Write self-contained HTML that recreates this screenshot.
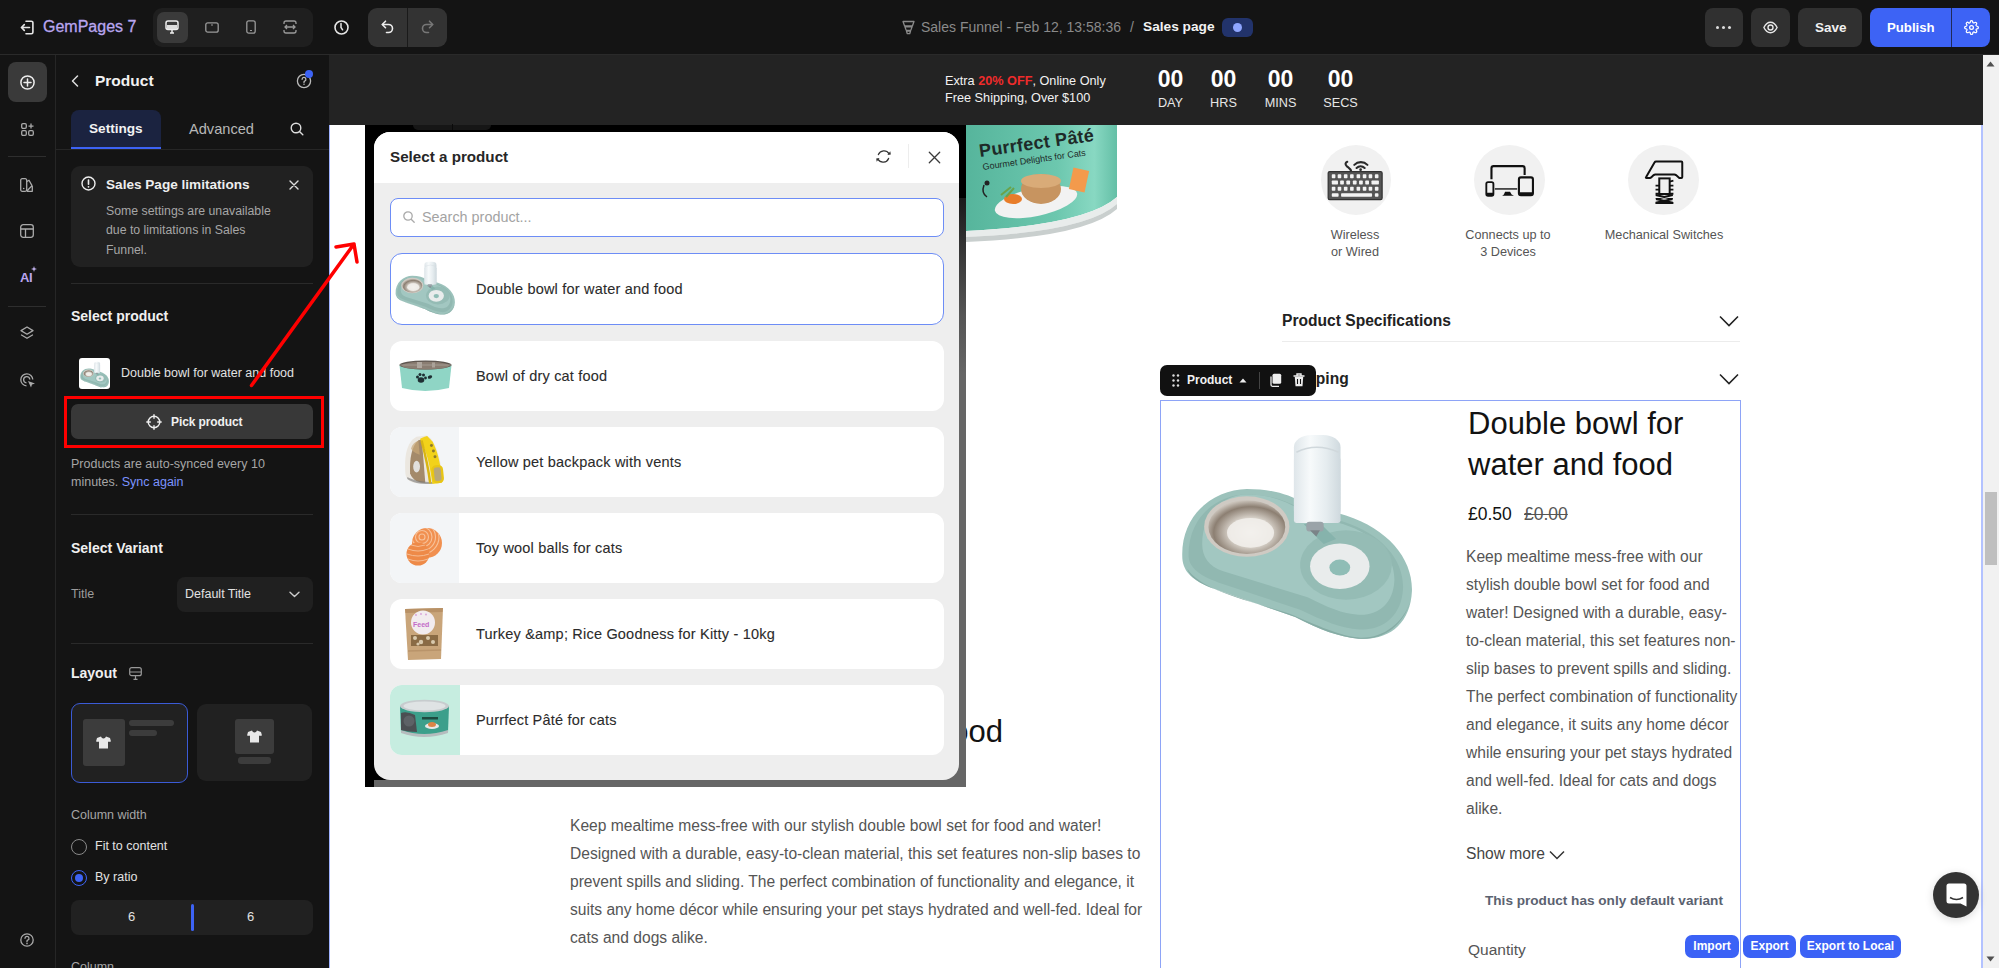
<!DOCTYPE html>
<html><head><meta charset="utf-8">
<style>
*{box-sizing:border-box;margin:0;padding:0}
html,body{width:1999px;height:968px;overflow:hidden;background:#141414;font-family:"Liberation Sans",sans-serif}
.a{position:absolute}
.t{position:absolute;white-space:nowrap;line-height:1}
svg{position:absolute;overflow:visible}
</style></head><body>
<svg style="left:0;top:0;width:0;height:0;position:absolute" width="0" height="0">
<defs>
<radialGradient id="steel" cx="0.55" cy="0.6" r="0.6"><stop offset="0" stop-color="#f4f2ee"/><stop offset="0.45" stop-color="#d8d2ca"/><stop offset="0.8" stop-color="#8c7f72"/><stop offset="1" stop-color="#c9c2b9"/></radialGradient>
<linearGradient id="bottle" x1="0" x2="1"><stop offset="0" stop-color="#dfe6ea"/><stop offset="0.35" stop-color="#f7fafb"/><stop offset="0.7" stop-color="#e5ecef"/><stop offset="1" stop-color="#cfd9de"/></linearGradient>
<symbol id="dbowl" viewBox="0 0 1089 968">
<path d="M70 560C60 380 200 280 330 278C430 278 500 300 560 335L730 385C900 440 1000 560 996 690C990 820 905 892 780 882C700 876 625 845 525 795L200 682C110 650 75 612 70 560Z" fill="#9cc2bb"/>
<path d="M95 545C95 390 210 300 330 300C420 300 490 325 550 360L720 410C880 460 965 570 960 680C955 790 880 850 785 845C710 840 640 810 545 765L215 655C130 625 95 590 95 545Z" fill="#91b8b1"/>
<path d="M150 500C150 370 240 300 330 300C420 300 500 330 555 370L720 420C860 465 930 560 925 650C920 740 860 790 780 785C715 782 655 755 575 715L235 610C175 590 150 550 150 500Z" fill="#a2c7c1"/>
<path d="M90 600C140 680 300 720 500 780C620 830 700 870 790 878C880 880 960 820 990 730C960 830 880 890 780 882C700 876 625 845 525 795L200 682C140 660 100 635 90 600Z" fill="#86aca5"/>
<ellipse cx="330" cy="430" rx="172" ry="122" fill="#cfcac3"/>
<ellipse cx="330" cy="432" rx="155" ry="108" fill="url(#steel)"/>
<ellipse cx="345" cy="455" rx="95" ry="60" fill="#f2f0ec" opacity="0.85"/>
<ellipse cx="730" cy="585" rx="185" ry="140" fill="#95bcb5"/>
<ellipse cx="705" cy="590" rx="120" ry="92" fill="#e9ecec"/>
<ellipse cx="705" cy="595" rx="42" ry="32" fill="#8fbdb6"/>
<path d="M560 420 640 500 690 480 620 410Z" fill="#86b3ac"/>
<rect x="520" y="60" width="188" height="355" rx="70" ry="50" fill="url(#bottle)"/>
<rect x="520" y="150" width="188" height="265" rx="10" fill="url(#bottle)"/>
<path d="M530 130Q610 90 700 130" fill="none" stroke="#d0d8dc" stroke-width="6"/>
<rect x="570" y="410" width="70" height="40" rx="12" fill="#9aa3a8"/>
<path d="M585 445 610 470 625 445Z" fill="#7b8488"/>
</symbol>
<symbol id="cbowl" viewBox="0 0 53 32">
<path d="M0.5 5 L52.5 5 L50 28 Q26 34 3 28 Z" fill="#8fd5c5"/>
<ellipse cx="26.5" cy="5" rx="26" ry="4.6" fill="#5e5650"/>
<ellipse cx="26.5" cy="5.6" rx="24" ry="3.8" fill="#8a7d72"/>
<rect x="18" y="2" width="5" height="6" fill="#b9b2aa" opacity="0.8"/>
<rect x="33" y="2.5" width="3" height="5" fill="#b9b2aa" opacity="0.7"/>
<path d="M0.5 5 L52.5 5" stroke="#a9a29a" stroke-width="0.8"/>
<g fill="#1f2f33"><ellipse cx="22" cy="20" rx="3.3" ry="2.8"/><circle cx="18.5" cy="17" r="1.5"/><circle cx="21" cy="14.5" r="1.5"/><circle cx="24.5" cy="15" r="1.5"/><circle cx="26.5" cy="18" r="1.4"/><ellipse cx="31" cy="17" rx="2.3" ry="1.6" transform="rotate(-25 31 17)"/></g>
</symbol>
<symbol id="bpack" viewBox="0 0 839 968">
<path d="M120 700C100 450 130 200 300 110L460 90C560 130 640 300 690 560L720 800C650 870 450 880 300 860C170 840 130 780 120 700Z" fill="#ebe7e0"/>
<path d="M195 700C185 480 215 260 330 165L385 155L440 850C340 850 240 820 195 700Z" fill="#a48a6a"/>
<ellipse cx="300" cy="590" rx="55" ry="95" fill="#e2e0dc"/>
<path d="M210 300C230 230 280 190 330 175L350 400C300 380 240 360 210 300Z" fill="#c9a878" opacity="0.7"/>
<path d="M150 760C250 820 400 840 560 840L560 870C420 880 250 860 150 790Z" fill="#777" opacity="0.6"/>
<path d="M355 145C400 110 470 95 470 95L560 190C630 330 680 520 700 700L705 850L555 870C520 600 470 350 355 145Z" fill="#f2d21a"/>
<path d="M380 170C440 400 490 620 520 860" fill="none" stroke="#d9b512" stroke-width="40"/>
<g fill="#8d7b2c"><circle cx="540" cy="250" r="24"/><circle cx="572" cy="340" r="24"/><circle cx="597" cy="432" r="24"/></g>
<rect x="565" y="585" width="150" height="255" rx="55" fill="#b8a77a" stroke="#e8c515" stroke-width="38" transform="rotate(-6 640 712)"/>
</symbol>
<symbol id="balls" viewBox="0 0 36 40">
<clipPath id="bc1"><circle cx="21" cy="16" r="15"/></clipPath><clipPath id="bc2"><circle cx="12" cy="27" r="11.5"/></clipPath>
<circle cx="21" cy="16" r="15" fill="#f19050"/>
<g fill="none" stroke="#f7c29a" stroke-width="1.1" clip-path="url(#bc1)"><circle cx="16" cy="10" r="3"/><circle cx="16" cy="10" r="6.5"/><circle cx="16" cy="10" r="10"/><circle cx="16" cy="10" r="13.5"/><circle cx="16" cy="10" r="17"/></g>
<circle cx="12" cy="27" r="11.5" fill="#ee8a48"/>
<g fill="none" stroke="#f5bc93" stroke-width="1" clip-path="url(#bc2)"><path d="M2 22q10 4 20 0"/><path d="M1 27q11 4 22 0"/><path d="M2 32q10 4 20 0"/><path d="M5 18q7 3 14 0"/></g>
<circle cx="21" cy="16" r="15" fill="none" stroke="#ffffff" stroke-opacity="0" />
</symbol>
<symbol id="bag" viewBox="0 0 42 54">
<path d="M2 2 L40 1 L38 52 L5 53 Z" fill="#c9a57a"/>
<path d="M2 2 L40 1 L39.5 5 L2.5 6Z" fill="#b89166"/>
<circle cx="20" cy="15.5" r="12" fill="#f2ecef"/>
<text x="10" y="20" font-family="Liberation Sans" font-size="7" font-weight="bold" fill="#c46bc9">Feed</text>
<g fill="#d7a0d8"><circle cx="13" cy="8" r="0.9"/><circle cx="18" cy="7" r="0.9"/><circle cx="23" cy="7.5" r="0.9"/></g>
<rect x="8" y="28" width="27" height="11" fill="#8a6b45"/>
<g fill="#d9c9ad"><circle cx="12" cy="31" r="2"/><circle cx="18" cy="35" r="2.2"/><circle cx="25" cy="31" r="2"/><circle cx="30" cy="35" r="2"/><circle cx="15" cy="37" r="1.6"/></g>
<path d="M5 44 L38 43" stroke="#b9946a" stroke-width="1.5"/>
</symbol>
<symbol id="can" viewBox="0 0 51 40">
<path d="M1 7 L50 7 L49 33 Q25 41 2 33Z" fill="#3c9f8b"/>
<ellipse cx="25.5" cy="7" rx="24.5" ry="6.2" fill="#c7ccce"/>
<ellipse cx="25.5" cy="7" rx="21" ry="4.5" fill="#dfe3e4"/>
<path d="M2 31 Q25 39 49 31 L49 34 Q25 42 2 34Z" fill="#b6bcbe"/>
<path d="M2 14 Q8 12 16 16 L18 33 Q9 33 2 31Z" fill="#4b4f52"/>
<circle cx="10" cy="22" r="5.5" fill="#5d6266"/>
<rect x="23" y="18" width="16" height="2.5" fill="#1e4a40"/>
<ellipse cx="33" cy="27" rx="7" ry="3" fill="#e8e8e8"/>
<ellipse cx="33" cy="25.5" rx="4" ry="2.5" fill="#d98447"/>
</symbol>
</defs></svg>
<!-- TOP BAR -->
<div class="a" style="left:0;top:0;width:1999px;height:54px;background:#141414"></div>
<div class="a" style="left:0;top:54px;width:1999px;height:1px;background:#2a2a2a"></div>

<!-- exit icon -->
<svg style="left:20px;top:20px" width="14" height="15" viewBox="0 0 14 15"><path d="M6 1.2h5.3a1.6 1.6 0 0 1 1.6 1.6v9.4a1.6 1.6 0 0 1-1.6 1.6H6" fill="none" stroke="#e6e6e6" stroke-width="1.6" stroke-linecap="round"/><path d="M9.5 7.5H1.5M4.3 4.6 1.4 7.5l2.9 2.9" fill="none" stroke="#e6e6e6" stroke-width="1.6" stroke-linecap="round" stroke-linejoin="round"/></svg>
<div class="t" style="left:43px;top:19px;font-size:16px;color:#b9a6f0;-webkit-text-stroke:0.3px #b9a6f0">GemPages 7</div>
<!-- device group -->
<div class="a" style="left:153px;top:8px;width:160px;height:39px;border-radius:9px;background:#1f1f1f"></div>
<div class="a" style="left:157px;top:12px;width:31px;height:31px;border-radius:7px;background:#3a3a3a"></div>
<svg style="left:165px;top:20px" width="14" height="14" viewBox="0 0 14 14"><rect x="1" y="1" width="12" height="8.5" rx="2" fill="none" stroke="#eee" stroke-width="1.5"/><rect x="2" y="5" width="10" height="4" fill="#ddd"/><path d="M5 13h4M7 10v3" stroke="#eee" stroke-width="1.5"/></svg>
<svg style="left:205px;top:22px" width="14" height="11" viewBox="0 0 14 11"><rect x="0.8" y="0.8" width="12.4" height="9.4" rx="2" fill="none" stroke="#9a9a9a" stroke-width="1.3"/><path d="M6 3h2" stroke="#9a9a9a" stroke-width="1.2"/></svg>
<svg style="left:246px;top:20px" width="10" height="14" viewBox="0 0 10 14"><rect x="0.8" y="0.8" width="8.4" height="12.4" rx="2" fill="none" stroke="#9a9a9a" stroke-width="1.3"/><path d="M4 10.5h2" stroke="#9a9a9a" stroke-width="1.2"/></svg>
<svg style="left:283px;top:20px" width="14" height="14" viewBox="0 0 14 14"><path d="M1 4V3a2 2 0 0 1 2-2h8a2 2 0 0 1 2 2v1M1 10v1a2 2 0 0 0 2 2h8a2 2 0 0 0 2-2v-1M2 7h10M4 5 2 7l2 2M10 5l2 2-2 2" fill="none" stroke="#9a9a9a" stroke-width="1.3"/></svg>
<!-- history -->
<svg style="left:334px;top:20px" width="15" height="15" viewBox="0 0 15 15"><circle cx="7.5" cy="7.5" r="6.5" fill="none" stroke="#e6e6e6" stroke-width="1.6"/><path d="M7 3.6v3.8l1.6 2.4" fill="none" stroke="#e6e6e6" stroke-width="1.5" stroke-linecap="round"/></svg>
<!-- undo redo -->
<div class="a" style="left:368px;top:8px;width:79px;height:39px;border-radius:9px;background:#333"></div>
<div class="a" style="left:407px;top:8px;width:1px;height:39px;background:#1a1a1a"></div>
<svg style="left:381px;top:20px" width="13" height="13" viewBox="0 0 13 13"><path d="M1.5 4.5h6a4 4 0 0 1 0 8H5.5" fill="none" stroke="#eee" stroke-width="1.6" stroke-linecap="round"/><path d="M4.5 1.2 1.3 4.5l3.2 3.2" fill="none" stroke="#eee" stroke-width="1.6" stroke-linecap="round" stroke-linejoin="round"/></svg>
<svg style="left:421px;top:20px" width="13" height="13" viewBox="0 0 13 13"><path d="M11.5 4.5h-6a4 4 0 0 0 0 8h2" fill="none" stroke="#777" stroke-width="1.6" stroke-linecap="round"/><path d="M8.5 1.2l3.2 3.3-3.2 3.2" fill="none" stroke="#777" stroke-width="1.6" stroke-linecap="round" stroke-linejoin="round"/></svg>
<!-- center title -->
<svg style="left:902px;top:20px" width="13" height="15" viewBox="0 0 13 15"><path d="M1 1.5h11l-1.6 4.5H2.6zM2.9 6.8h7.2l-1.3 3.6H4.2zM4.5 11.2h4l-0.8 2.5H5.3z" fill="none" stroke="#8a8a8a" stroke-width="1.3" stroke-linejoin="round"/></svg>
<div class="t" style="left:921px;top:20px;font-size:14px;color:#8a8a8a">Sales Funnel - Feb 12, 13:58:36</div>
<div class="t" style="left:1130px;top:20px;font-size:14px;color:#8a8a8a">/</div>
<div class="t" style="left:1143px;top:20px;font-size:13.7px;color:#f2f2f2;font-weight:bold">Sales page</div>
<div class="a" style="left:1222px;top:18px;width:31px;height:19px;border-radius:6px;background:#22336b"></div>
<div class="a" style="left:1233px;top:23px;width:9px;height:9px;border-radius:50%;background:#8fa6ff"></div>
<!-- right buttons -->
<div class="a" style="left:1705px;top:8px;width:38px;height:39px;border-radius:8px;background:#303030"></div>
<div class="a" style="left:1716px;top:26px;width:3px;height:3px;border-radius:50%;background:#ddd;box-shadow:6px 0 0 #ddd,12px 0 0 #ddd"></div>
<div class="a" style="left:1751px;top:8px;width:39px;height:39px;border-radius:8px;background:#303030"></div>
<svg style="left:1763px;top:21px" width="15" height="13" viewBox="0 0 15 13"><path d="M0.9 6.5C2.6 3 5 1.3 7.5 1.3S12.4 3 14.1 6.5C12.4 10 10 11.7 7.5 11.7S2.6 10 0.9 6.5z" fill="none" stroke="#e6e6e6" stroke-width="1.4"/><circle cx="7.5" cy="6.5" r="2.5" fill="none" stroke="#e6e6e6" stroke-width="1.4"/></svg>
<div class="a" style="left:1798px;top:8px;width:64px;height:39px;border-radius:8px;background:#303030"></div>
<div class="t" style="left:1815px;top:21px;font-size:13.5px;color:#f0f0f0;font-weight:bold">Save</div>
<div class="a" style="left:1870px;top:8px;width:120px;height:39px;border-radius:8px;background:#3d63f5"></div>
<div class="a" style="left:1951px;top:8px;width:1px;height:39px;background:#1f2a5a"></div>
<div class="t" style="left:1887px;top:21px;font-size:13.2px;color:#fff;font-weight:bold">Publish</div>
<svg style="left:1964px;top:20px" width="15" height="15" viewBox="0 0 24 24"><path d="M12 15a3 3 0 1 0 0-6 3 3 0 0 0 0 6z" fill="none" stroke="#fff" stroke-width="2"/><path d="M19.4 15a1.65 1.65 0 0 0 .33 1.82l.06.06a2 2 0 1 1-2.83 2.83l-.06-.06a1.65 1.65 0 0 0-1.82-.33 1.65 1.65 0 0 0-1 1.51V21a2 2 0 1 1-4 0v-.09A1.65 1.65 0 0 0 9 19.4a1.65 1.65 0 0 0-1.82.33l-.06.06a2 2 0 1 1-2.83-2.83l.06-.06A1.65 1.65 0 0 0 4.68 15a1.65 1.65 0 0 0-1.51-1H3a2 2 0 1 1 0-4h.09A1.65 1.65 0 0 0 4.6 9a1.65 1.65 0 0 0-.33-1.82l-.06-.06a2 2 0 1 1 2.83-2.83l.06.06A1.650 1.65 0 0 0 9 4.68a1.65 1.65 0 0 0 1-1.51V3a2 2 0 1 1 4 0v.09a1.65 1.65 0 0 0 1 1.51 1.65 1.65 0 0 0 1.820-.33l.06-.06a2 2 0 1 1 2.83 2.830l-.06.06A1.65 1.65 0 0 0 19.4 9a1.65 1.65 0 0 0 1.51 1H21a2 2 0 1 1 0 4h-.09a1.65 1.65 0 0 0-1.51 1z" fill="none" stroke="#fff" stroke-width="2"/></svg>

<!-- LEFT RAIL -->
<div class="a" style="left:55px;top:55px;width:1px;height:913px;background:#262626"></div>

<div class="a" style="left:8px;top:62px;width:39px;height:40px;border-radius:8px;background:#3a3a3a"></div>
<svg style="left:20px;top:75px" width="15" height="15" viewBox="0 0 15 15"><circle cx="7.5" cy="7.5" r="6.6" fill="none" stroke="#eee" stroke-width="1.5"/><path d="M7.5 4v7M4 7.5h7" stroke="#eee" stroke-width="1.5" stroke-linecap="round"/></svg>
<svg style="left:21px;top:123px" width="13" height="13" viewBox="0 0 13 13"><rect x="0.7" y="0.7" width="4.6" height="4.6" rx="1.2" fill="none" stroke="#aaa" stroke-width="1.3"/><rect x="0.7" y="7.7" width="4.6" height="4.6" rx="1.2" fill="none" stroke="#aaa" stroke-width="1.3"/><rect x="7.7" y="7.7" width="4.6" height="4.6" rx="1.2" fill="none" stroke="#aaa" stroke-width="1.3"/><path d="M10 0.6v5M7.5 3.1h5" stroke="#aaa" stroke-width="1.3"/></svg>
<div class="a" style="left:8px;top:156px;width:38px;height:1px;background:#2e2e2e"></div>
<svg style="left:20px;top:178px" width="14" height="14" viewBox="0 0 14 14"><rect x="0.7" y="0.7" width="6" height="12.6" rx="1.5" fill="none" stroke="#aaa" stroke-width="1.3"/><path d="M6.7 3.5l2.3-1.2 3 5.3-5.3 5.7M6.7 13.3h5.6V8" fill="none" stroke="#aaa" stroke-width="1.3" stroke-linejoin="round"/><circle cx="3.7" cy="10.5" r="0.8" fill="#aaa"/></svg>
<svg style="left:20px;top:224px" width="14" height="14" viewBox="0 0 14 14"><rect x="0.7" y="0.7" width="12.6" height="12.6" rx="2.5" fill="none" stroke="#aaa" stroke-width="1.3"/><path d="M0.7 5h12.6M5.5 5v8.3" stroke="#aaa" stroke-width="1.3"/></svg>
<div class="t" style="left:20px;top:271px;font-size:13px;font-weight:bold;color:#b9a4f0;letter-spacing:-0.5px">AI</div>
<svg style="left:31px;top:266px" width="6" height="6" viewBox="0 0 6 6"><path d="M3 0 3.7 2.3 6 3 3.7 3.7 3 6 2.3 3.7 0 3 2.3 2.3z" fill="#c9b8f5"/></svg>
<div class="a" style="left:8px;top:306px;width:38px;height:1px;background:#2e2e2e"></div>
<svg style="left:20px;top:326px" width="14" height="15" viewBox="0 0 14 15"><path d="M7 1 13 4.6 7 8.2 1 4.6z" fill="none" stroke="#aaa" stroke-width="1.3" stroke-linejoin="round"/><path d="M1.5 9 7 12.3l5.5-3.3" fill="none" stroke="#aaa" stroke-width="1.3" stroke-linejoin="round" stroke-linecap="round"/></svg>
<svg style="left:20px;top:373px" width="16" height="16" viewBox="0 0 16 16"><path d="M12.8 6.5A6 6 0 1 0 6.5 12.8" fill="none" stroke="#aaa" stroke-width="1.3"/><path d="M9.8 6.5A3.1 3.1 0 1 0 6.5 9.8" fill="none" stroke="#aaa" stroke-width="1.3"/><path d="M8 8l7 2.5-3 1-1 3z" fill="#aaa"/></svg>
<svg style="left:20px;top:933px" width="14" height="14" viewBox="0 0 14 14"><circle cx="7" cy="7" r="6.2" fill="none" stroke="#aaa" stroke-width="1.3"/><path d="M5 5.3a2 2 0 1 1 2.7 1.9c-.5.2-.7.5-.7 1v.6" fill="none" stroke="#aaa" stroke-width="1.3" stroke-linecap="round"/><circle cx="7" cy="10.6" r="0.8" fill="#aaa"/></svg>
<!-- SETTINGS PANEL -->
<svg style="left:71px;top:75px" width="8" height="12" viewBox="0 0 8 12"><path d="M6.5 1 1.5 6l5 5" fill="none" stroke="#ddd" stroke-width="1.5" stroke-linecap="round" stroke-linejoin="round"/></svg>
<div class="t" style="left:95px;top:73px;font-size:15.5px;font-weight:bold;color:#f2f2f2">Product</div>
<svg style="left:296px;top:73px" width="16" height="16" viewBox="0 0 16 16"><circle cx="8" cy="8" r="6.6" fill="none" stroke="#bbb" stroke-width="1.3"/><path d="M6.1 6.3a1.9 1.9 0 1 1 2.6 1.8c-.5.2-.7.5-.7 1v.4" fill="none" stroke="#bbb" stroke-width="1.3" stroke-linecap="round"/><circle cx="8" cy="11.3" r="0.75" fill="#bbb"/></svg>
<div class="a" style="left:305px;top:70px;width:8px;height:8px;border-radius:50%;background:#3d63f5"></div>
<div class="a" style="left:55px;top:149px;width:274px;height:1px;background:#262626"></div>
<div class="a" style="left:71px;top:110px;width:90px;height:39px;border-radius:8px 8px 0 0;background:#1b2340"></div>
<div class="a" style="left:71px;top:147px;width:90px;height:2px;background:#3d63f5"></div>
<div class="t" style="left:89px;top:122px;font-size:13.6px;font-weight:bold;color:#f2f2f2">Settings</div>
<div class="t" style="left:189px;top:122px;font-size:14.6px;color:#b8b8b8">Advanced</div>
<svg style="left:290px;top:122px" width="14" height="14" viewBox="0 0 14 14"><circle cx="6" cy="6" r="4.8" fill="none" stroke="#ddd" stroke-width="1.4"/><path d="M9.5 9.5 12.8 12.8" stroke="#ddd" stroke-width="1.4" stroke-linecap="round"/></svg>
<!-- limitations -->
<div class="a" style="left:71px;top:166px;width:242px;height:101px;border-radius:9px;background:#212121"></div>
<svg style="left:81px;top:176px" width="15" height="15" viewBox="0 0 15 15"><circle cx="7.5" cy="7.5" r="6.5" fill="none" stroke="#eee" stroke-width="1.4"/><path d="M7.5 4v4.3" stroke="#eee" stroke-width="1.6" stroke-linecap="round"/><circle cx="7.5" cy="10.8" r="0.9" fill="#eee"/></svg>
<div class="t" style="left:106px;top:178px;font-size:13.6px;font-weight:bold;color:#eeeeee">Sales Page limitations</div>
<svg style="left:289px;top:180px" width="10" height="10" viewBox="0 0 10 10"><path d="M1 1l8 8M9 1 1 9" stroke="#ddd" stroke-width="1.4" stroke-linecap="round"/></svg>
<div class="a" style="left:106px;top:202px;width:200px;font-size:12.3px;line-height:19.4px;color:#a6a6a6">Some settings are unavailable<br>due to limitations in Sales<br>Funnel.</div>
<div class="a" style="left:71px;top:283px;width:242px;height:1px;background:#2a2a2a"></div>
<div class="t" style="left:71px;top:309px;font-size:14px;font-weight:bold;color:#f0f0f0">Select product</div>
<div class="a" id="thumb0" style="left:79px;top:358px;width:31px;height:31px;border-radius:3px;background:#fff;overflow:hidden"><svg style="left:-1px;top:2px" width="34" height="30"><use href="#dbowl"/></svg></div>
<div class="t" style="left:121px;top:367px;font-size:12.5px;color:#e2e2e2">Double bowl for water and food</div>
<div class="a" style="left:71px;top:404px;width:242px;height:35px;border-radius:7px;background:#383838"></div>
<svg style="left:146px;top:414px" width="16" height="16" viewBox="0 0 16 16"><circle cx="8" cy="8" r="5.8" fill="none" stroke="#eee" stroke-width="1.4"/><path d="M8 0.8v3.5M8 11.7v3.5M0.8 8h3.5M11.7 8h3.5" stroke="#eee" stroke-width="1.4" stroke-linecap="round"/></svg>
<div class="t" style="left:171px;top:416px;font-size:12px;font-weight:bold;color:#f0f0f0;letter-spacing:-0.1px">Pick product</div>
<div class="a" style="left:64px;top:396px;width:260px;height:52px;border:3px solid #ff0000"></div>
<div class="a" style="left:71px;top:455px;width:240px;font-size:12.5px;line-height:18px;color:#a6a6a6">Products are auto-synced every 10 minutes. <span style="color:#7b93ff">Sync again</span></div>
<div class="a" style="left:71px;top:514px;width:242px;height:1px;background:#2a2a2a"></div>
<div class="t" style="left:71px;top:541px;font-size:14px;font-weight:bold;color:#f0f0f0">Select Variant</div>
<div class="t" style="left:71px;top:588px;font-size:12.5px;color:#9c9c9c">Title</div>
<div class="a" style="left:177px;top:577px;width:136px;height:35px;border-radius:8px;background:#202020"></div>
<div class="t" style="left:185px;top:588px;font-size:12.5px;color:#e2e2e2">Default Title</div>
<svg style="left:289px;top:591px" width="11" height="7" viewBox="0 0 11 7"><path d="M1 1.2l4.5 4.3 4.5-4.3" fill="none" stroke="#ccc" stroke-width="1.4" stroke-linecap="round" stroke-linejoin="round"/></svg>
<div class="a" style="left:71px;top:643px;width:242px;height:1px;background:#2a2a2a"></div>
<div class="t" style="left:71px;top:666px;font-size:14px;font-weight:bold;color:#f0f0f0">Layout</div>
<svg style="left:129px;top:667px" width="13" height="13" viewBox="0 0 13 13"><rect x="0.7" y="0.7" width="11.6" height="8" rx="2" fill="none" stroke="#999" stroke-width="1.2"/><path d="M1 5h11M4.5 12.3h4M6.5 9v3" stroke="#999" stroke-width="1.2"/></svg>
<div class="a" style="left:71px;top:703px;width:117px;height:80px;border-radius:9px;background:#212121;border:1.5px solid #3b5bd6"></div>
<div class="a" style="left:83px;top:719px;width:42px;height:47px;border-radius:3px;background:#3c3c3c"></div>
<div class="a" style="left:129px;top:720px;width:45px;height:6px;border-radius:3px;background:#3c3c3c"></div>
<div class="a" style="left:129px;top:730px;width:28px;height:6px;border-radius:3px;background:#3c3c3c"></div>
<svg style="left:96px;top:736px" width="15" height="13" viewBox="0 0 15 13"><path d="M5 0.5 1 2 0 5.5l2.6.6.4-1.3V12.5h9V4.8l.4 1.3 2.6-.6L14 2 10 .5C9.5 1.8 8.7 2.5 7.5 2.5S5.5 1.8 5 .5z" fill="#e8e8e8"/></svg>
<div class="a" style="left:197px;top:704px;width:115px;height:77px;border-radius:9px;background:#212121"></div>
<div class="a" style="left:235px;top:719px;width:39px;height:35px;border-radius:3px;background:#3c3c3c"></div>
<div class="a" style="left:238px;top:757px;width:33px;height:7px;border-radius:3px;background:#3c3c3c"></div>
<svg style="left:247px;top:730px" width="15" height="13" viewBox="0 0 15 13"><path d="M5 0.5 1 2 0 5.5l2.6.6.4-1.3V12.5h9V4.8l.4 1.3 2.6-.6L14 2 10 .5C9.5 1.8 8.7 2.5 7.5 2.5S5.5 1.8 5 .5z" fill="#e8e8e8"/></svg>
<div class="t" style="left:71px;top:809px;font-size:12.5px;color:#a6a6a6">Column width</div>
<div class="a" style="left:71px;top:839px;width:16px;height:16px;border-radius:50%;border:1.3px solid #8a8a8a"></div>
<div class="t" style="left:95px;top:840px;font-size:12.5px;color:#e2e2e2">Fit to content</div>
<div class="a" style="left:71px;top:870px;width:16px;height:16px;border-radius:50%;border:1.5px solid #3d63f5"></div>
<div class="a" style="left:75px;top:874px;width:8px;height:8px;border-radius:50%;background:#3d63f5"></div>
<div class="t" style="left:95px;top:871px;font-size:12.5px;color:#e2e2e2">By ratio</div>
<div class="a" style="left:71px;top:900px;width:242px;height:35px;border-radius:8px;background:#212121"></div>
<div class="t" style="left:128px;top:910px;font-size:13px;color:#e2e2e2">6</div>
<div class="t" style="left:247px;top:910px;font-size:13px;color:#e2e2e2">6</div>
<div class="a" style="left:191px;top:904px;width:3px;height:27px;border-radius:2px;background:#3d63f5"></div>
<div class="t" style="left:71px;top:961px;font-size:12.5px;color:#a6a6a6">Column</div>

<!-- CANVAS -->
<div class="a" style="left:330px;top:55px;width:1653px;height:913px;background:#fff"></div>
<div class="a" style="left:329px;top:55px;width:1654px;height:70px;background:#232323"></div>
<div class="a" style="left:329px;top:125px;width:1px;height:843px;background:#9fb2ff"></div>
<div class="a" style="left:1981px;top:125px;width:2px;height:843px;background:#b3c2ff"></div>
<!-- scrollbar -->
<div class="a" style="left:1983px;top:55px;width:16px;height:913px;background:#f1f1f1"></div>
<div class="a" style="left:1985px;top:492px;width:12px;height:73px;background:#bfbfbf"></div>
<svg style="left:1986px;top:61px" width="9" height="6" viewBox="0 0 9 6"><path d="M4.5 0.5 8.5 5.5H0.5z" fill="#505050"/></svg>
<svg style="left:1986px;top:956px" width="9" height="6" viewBox="0 0 9 6"><path d="M4.5 5.5 8.5 0.5H0.5z" fill="#505050"/></svg>
<!-- countdown -->
<div class="t" style="left:945px;top:75px;font-size:12.7px;color:#f2f2f2">Extra <b style="color:#ef2b2b">20% OFF</b>, Online Only</div>
<div class="t" style="left:945px;top:92px;font-size:12.7px;color:#f2f2f2">Free Shipping, Over $100</div>
<div class="t" style="left:1130px;top:68px;width:81px;text-align:center;font-size:23px;font-weight:bold;color:#fff">00</div>
<div class="t" style="left:1130px;top:96.5px;width:81px;text-align:center;font-size:12.7px;color:#e6e6e6">DAY</div>
<div class="t" style="left:1183px;top:68px;width:81px;text-align:center;font-size:23px;font-weight:bold;color:#fff">00</div>
<div class="t" style="left:1183px;top:96.5px;width:81px;text-align:center;font-size:12.7px;color:#e6e6e6">HRS</div>
<div class="t" style="left:1240px;top:68px;width:81px;text-align:center;font-size:23px;font-weight:bold;color:#fff">00</div>
<div class="t" style="left:1240px;top:96.5px;width:81px;text-align:center;font-size:12.7px;color:#e6e6e6">MINS</div>
<div class="t" style="left:1300px;top:68px;width:81px;text-align:center;font-size:23px;font-weight:bold;color:#fff">00</div>
<div class="t" style="left:1300px;top:96.5px;width:81px;text-align:center;font-size:12.7px;color:#e6e6e6">SECS</div>
<!-- left column title & description -->
<div class="t" style="left:574px;top:716px;font-size:31px;color:#121212">Double bowl for water and food</div>
<div class="a" style="left:570px;top:812px;width:585px;font-size:15.6px;line-height:28px;color:#555">Keep mealtime mess-free with our stylish double bowl set for food and water! Designed with a durable, easy-to-clean material, this set features non-slip bases to prevent spills and sliding. The perfect combination of functionality and elegance, it suits any home décor while ensuring your pet stays hydrated and well-fed. Ideal for cats and dogs alike.</div>
<!-- can image top -->
<div class="a" id="canimg" style="left:966px;top:125px;width:151px;height:116px;overflow:hidden"></div>
<!-- features -->
<div class="a" style="left:1321px;top:145px;width:70px;height:70px;border-radius:50%;background:#f1f1f1"></div>
<div class="a" style="left:1474px;top:145px;width:71px;height:70px;border-radius:50%;background:#f1f1f1"></div>
<div class="a" style="left:1628px;top:145px;width:71px;height:70px;border-radius:50%;background:#f1f1f1"></div>
<div class="a" style="left:1300px;top:227px;width:110px;text-align:center;font-size:12.7px;line-height:16.5px;color:#555">Wireless<br>or Wired</div>
<div class="a" style="left:1450px;top:227px;width:116px;text-align:center;font-size:12.7px;line-height:16.5px;color:#555">Connects up to<br>3 Devices</div>
<div class="a" style="left:1594px;top:227px;width:140px;text-align:center;font-size:12.7px;line-height:16.5px;color:#555">Mechanical Switches</div>

<svg style="left:1320px;top:150px" width="70" height="60" viewBox="0 0 1129 968">
<path d="M505 350C500 300 470 290 430 260C400 230 410 200 440 190" fill="none" stroke="#2a2a2a" stroke-width="34" stroke-linecap="round"/>
<path d="M553 240A150 150 0 0 1 765 240M590 290A95 95 0 0 1 720 290" fill="none" stroke="#2a2a2a" stroke-width="34" stroke-linecap="round"/><circle cx="655" cy="318" r="22" fill="#2a2a2a"/>
<rect x="132" y="347" width="870" height="452" rx="25" fill="#555" stroke="#333" stroke-width="20"/>
<g fill="#f3f3f3"><rect x="190" y="393" width="58" height="64" rx="12"/><rect x="285" y="393" width="58" height="64" rx="12"/><rect x="385" y="393" width="58" height="64" rx="12"/><rect x="485" y="393" width="58" height="64" rx="12"/><rect x="590" y="393" width="58" height="64" rx="12"/><rect x="690" y="393" width="58" height="64" rx="12"/><rect x="785" y="393" width="58" height="64" rx="12"/><rect x="885" y="393" width="58" height="64" rx="12"/><rect x="190" y="493" width="100" height="64" rx="12"/><rect x="325" y="493" width="60" height="64" rx="12"/><rect x="425" y="493" width="60" height="64" rx="12"/><rect x="530" y="493" width="60" height="64" rx="12"/><rect x="630" y="493" width="60" height="64" rx="12"/><rect x="730" y="493" width="60" height="64" rx="12"/><rect x="830" y="493" width="120" height="64" rx="12"/><rect x="190" y="593" width="58" height="64" rx="12"/><rect x="285" y="593" width="58" height="64" rx="12"/><rect x="385" y="593" width="58" height="64" rx="12"/><rect x="485" y="593" width="58" height="64" rx="12"/><rect x="590" y="593" width="58" height="64" rx="12"/><rect x="690" y="593" width="58" height="64" rx="12"/><rect x="785" y="593" width="58" height="64" rx="12"/><rect x="885" y="593" width="58" height="64" rx="12"/><rect x="190" y="698" width="110" height="55" rx="12"/><rect x="340" y="698" width="500" height="55" rx="12"/><rect x="885" y="698" width="58" height="55" rx="12"/></g>
</svg>
<svg style="left:1480px;top:150px" width="60" height="60" viewBox="0 0 968 968">
<path d="M185 470V295a35 35 0 0 1 35-35H685a35 35 0 0 1 35 35V405" fill="none" stroke="#111" stroke-width="34"/>
<path d="M240 628H600" stroke="#222" stroke-width="24"/>
<path d="M405 672H485L510 718L548 738H358L385 718Z" fill="#111"/>
<rect x="102" y="518" width="114" height="220" rx="28" fill="none" stroke="#111" stroke-width="30"/>
<rect x="102" y="690" width="114" height="48" rx="12" fill="#111"/>
<rect x="628" y="442" width="226" height="288" rx="32" fill="none" stroke="#111" stroke-width="34"/>
<rect x="628" y="680" width="226" height="50" rx="14" fill="#111"/>
</svg>
<svg style="left:1630px;top:150px" width="70" height="60" viewBox="0 0 1129 968">
<path d="M258 438L395 200Q403 187 420 187H828Q843 187 843 202V436Q843 451 828 451H795L742 405Q732 397 716 397H407Q392 397 382 405L345 438Q335 451 320 451H266Q250 451 258 438Z" fill="none" stroke="#111" stroke-width="32" stroke-linejoin="round"/>
<rect x="472" y="458" width="168" height="252" fill="none" stroke="#111" stroke-width="32"/>
<path d="M412 575H472M412 640H472M412 705H472M640 510L700 495M640 575H700M640 640H700M640 705H700" stroke="#111" stroke-width="30"/>
<path d="M415 725L690 790M690 725L415 790M415 790L690 850M690 790L415 850M410 855H700" stroke="#111" stroke-width="34"/>
</svg>
<!-- can image -->
<div class="a" style="left:966px;top:125px;width:151px;height:117px;overflow:hidden">
<svg style="left:0;top:0" width="151" height="117" viewBox="0 0 151 117">
<defs><linearGradient id="cang" x1="0" x2="1"><stop offset="0" stop-color="#56b59c"/><stop offset="0.6" stop-color="#6cc7ae"/><stop offset="0.85" stop-color="#88d8c2"/><stop offset="1" stop-color="#64bfa6"/></linearGradient></defs>
<path d="M0 0H151V72Q120 100 0 106Z" fill="url(#cang)"/>
<path d="M0 106Q120 100 151 72V79Q120 107 0 112Z" fill="#e8eceb"/>
<path d="M0 112Q120 107 151 79V84Q120 112 0 117Z" fill="#c9cfce"/>
<text x="14" y="32" transform="rotate(-8 14 32)" font-family="Liberation Sans" font-weight="bold" font-size="18" fill="#1e2a28" letter-spacing="0.3">Purrfect Pâté</text>
<text x="17" y="45" transform="rotate(-8 17 45)" font-family="Liberation Sans" font-size="9" fill="#1e2a28">Gourmet Delights for Cats</text>
<ellipse cx="70" cy="77" rx="42" ry="14" transform="rotate(-12 70 77)" fill="#f2f2f2"/>
<ellipse cx="75" cy="64" rx="20" ry="15" fill="#c79460"/>
<ellipse cx="75" cy="56" rx="20" ry="7" fill="#d9ab78"/>
<ellipse cx="47" cy="74" rx="9" ry="5" fill="#e87d2a"/>
<path d="M35 70l10-8M40 72l8-9" stroke="#6aa34a" stroke-width="2"/>
<rect x="105" y="44" width="16" height="22" transform="rotate(12 113 55)" fill="#f39a4c"/>
<path d="M18 60q-3 8 3 12" fill="none" stroke="#222" stroke-width="1.5"/><circle cx="21" cy="58" r="2.5" fill="#222"/>
</svg></div>
<!-- accordions -->
<div class="t" style="left:1282px;top:313px;font-size:15.6px;font-weight:bold;color:#222">Product Specifications</div>
<svg style="left:1719px;top:315px" width="20" height="12" viewBox="0 0 20 12"><path d="M1 1.5l9 9 9-9" fill="none" stroke="#222" stroke-width="1.6"/></svg>
<div class="a" style="left:1282px;top:341px;width:458px;height:1px;background:#ececec"></div>
<div class="t" style="left:1282px;top:371px;font-size:15.6px;font-weight:bold;color:#222">Shipping</div>
<svg style="left:1719px;top:373px" width="20" height="12" viewBox="0 0 20 12"><path d="M1 1.5l9 9 9-9" fill="none" stroke="#222" stroke-width="1.6"/></svg>
<!-- product box -->
<div class="a" style="left:1160px;top:400px;width:581px;height:600px;border:1px solid #8ea4f7"></div>
<svg style="left:1165px;top:420px" width="270" height="240" viewBox="0 0 1089 968"><use href="#dbowl"/></svg>
<div class="a" style="left:1468px;top:403px;font-size:31px;line-height:41px;color:#121212;width:270px">Double bowl for<br>water and food</div>
<div class="t" style="left:1468px;top:506px;font-size:17.5px;color:#121212">£0.50</div>
<div class="t" style="left:1524px;top:506px;font-size:17.5px;color:#555;text-decoration:line-through">£0.00</div>
<div class="a" style="left:1466px;top:543px;width:280px;font-size:15.6px;line-height:28px;color:#555">Keep mealtime mess-free with our<br>stylish double bowl set for food and<br>water! Designed with a durable, easy-<br>to-clean material, this set features non-<br>slip bases to prevent spills and sliding.<br>The perfect combination of functionality<br>and elegance, it suits any home décor<br>while ensuring your pet stays hydrated<br>and well-fed. Ideal for cats and dogs<br>alike.</div>
<div class="t" style="left:1466px;top:846px;font-size:15.6px;color:#444">Show more</div>
<svg style="left:1549px;top:850px" width="16" height="10" viewBox="0 0 16 10"><path d="M1 1.5l7 7 7-7" fill="none" stroke="#333" stroke-width="1.5"/></svg>
<div class="t" style="left:1485px;top:894px;font-size:13.6px;font-weight:bold;color:#5b6270">This product has only default variant</div>
<div class="t" style="left:1468px;top:942px;font-size:15.5px;color:#555">Quantity</div>
<!-- toolbar -->
<div class="a" style="left:1160px;top:365px;width:156px;height:31px;border-radius:7px;background:#111"></div>
<svg style="left:1172px;top:374px" width="8" height="13" viewBox="0 0 8 13"><g fill="#ddd"><circle cx="1.5" cy="1.5" r="1.2"/><circle cx="6" cy="1.5" r="1.2"/><circle cx="1.5" cy="6.5" r="1.2"/><circle cx="6" cy="6.5" r="1.2"/><circle cx="1.5" cy="11.5" r="1.2"/><circle cx="6" cy="11.5" r="1.2"/></g></svg>
<div class="t" style="left:1187px;top:374px;font-size:12px;font-weight:bold;color:#f2f2f2">Product</div>
<svg style="left:1239px;top:378px" width="8" height="5" viewBox="0 0 8 5"><path d="M4 0.5 7.5 4.5H0.5z" fill="#eee"/></svg>
<div class="a" style="left:1259px;top:372px;width:1px;height:17px;background:#444"></div>
<svg style="left:1269px;top:373px" width="13" height="14" viewBox="0 0 13 14"><rect x="3.5" y="0.8" width="8.7" height="10" rx="1.5" fill="#eee"/><path d="M2 3.5v8.3a1.5 1.5 0 0 0 1.5 1.5h6.5" fill="none" stroke="#eee" stroke-width="1.3"/></svg>
<svg style="left:1293px;top:373px" width="12" height="14" viewBox="0 0 12 14"><path d="M0.5 3h11M4 3V1h4v2" fill="none" stroke="#eee" stroke-width="1.4"/><path d="M1.8 3.8h8.4l-.7 9.4H2.5z" fill="#eee"/><path d="M4.5 6v5M7.5 6v5" stroke="#111" stroke-width="1.1"/></svg>
<!-- import/export buttons -->
<div class="a" style="left:1685px;top:935px;width:54px;height:23px;border-radius:7px;background:#3b62f6"></div>
<div class="t" style="left:1685px;top:940px;width:54px;text-align:center;font-size:12px;font-weight:bold;color:#fff">Import</div>
<div class="a" style="left:1743px;top:935px;width:53px;height:23px;border-radius:7px;background:#3b62f6"></div>
<div class="t" style="left:1743px;top:940px;width:53px;text-align:center;font-size:12px;font-weight:bold;color:#fff">Export</div>
<div class="a" style="left:1800px;top:935px;width:101px;height:23px;border-radius:7px;background:#3b62f6"></div>
<div class="t" style="left:1800px;top:940px;width:101px;text-align:center;font-size:12px;font-weight:bold;color:#fff">Export to Local</div>
<!-- chat bubble -->
<div class="a" style="left:1933px;top:872px;width:46px;height:46px;border-radius:50%;background:#333;box-shadow:0 2px 8px rgba(0,0,0,0.15)"></div>
<svg style="left:1946px;top:883px" width="21" height="24" viewBox="0 0 21 24"><path d="M3 0.5h15a2.5 2.5 0 0 1 2.5 2.5v20.5l-6-3H3A2.5 2.5 0 0 1 0.5 18V3A2.5 2.5 0 0 1 3 0.5z" fill="#fff"/><path d="M4 14.5q6.5 4 13 0" fill="none" stroke="#333" stroke-width="1.5"/></svg>
<!-- MODAL BACKDROP -->
<div class="a" style="left:365px;top:125px;width:601px;height:662px;background:#000"></div>
<div class="a" style="left:959px;top:198px;width:7px;height:589px;background:linear-gradient(#1a1a1a,#3a3a3a 10%,#555 20%,#666 30%,#666)"></div>
<div class="a" style="left:374px;top:780px;width:592px;height:7px;background:#666"></div>
<div class="a" style="left:365px;top:780px;width:9px;height:7px;background:#000"></div>
<div class="a" style="left:940px;top:760px;width:26px;height:27px;background:#666"></div>
<div class="a" style="left:413px;top:125px;width:78px;height:5px;border-radius:0 0 6px 6px;background:#161616"></div>
<div class="a" style="left:452px;top:124px;width:1px;height:6px;background:#0a0a0a"></div>
<!-- MODAL -->
<div class="a" style="left:374px;top:132px;width:585px;height:648px;border-radius:16px;background:#eeeeee;overflow:hidden">
  <div class="a" style="left:0;top:0;width:585px;height:51px;background:#fff"></div>
</div>
<div class="t" style="left:390px;top:149px;font-size:15.2px;font-weight:bold;color:#262626">Select a product</div>
<svg style="left:876px;top:149px" width="15" height="15" viewBox="0 0 15 15"><path d="M2.4 5.6A6 6 0 0 1 13 4.6M12.6 9.4A6 6 0 0 1 2 10.4" fill="none" stroke="#333" stroke-width="1.3" stroke-linecap="round"/><path d="M11.4 5.9 14.8 5.6 14.3 2.2z" fill="#333"/><path d="M3.6 9.1 0.2 9.4 0.7 12.8z" fill="#333"/></svg>
<div class="a" style="left:908px;top:144px;width:1px;height:24px;background:#ededed"></div>
<svg style="left:928px;top:151px" width="13" height="13" viewBox="0 0 13 13"><path d="M1.3 1.3l10.4 10.4M11.7 1.3 1.3 11.7" stroke="#3a3a3a" stroke-width="1.3" stroke-linecap="round"/></svg>
<div class="a" style="left:390px;top:198px;width:554px;height:39px;border-radius:8px;background:#fff;border:1.5px solid #6d8df6"></div>
<svg style="left:403px;top:211px" width="12" height="12" viewBox="0 0 12 12"><circle cx="5" cy="5" r="4.2" fill="none" stroke="#aaa" stroke-width="1.3"/><path d="M8.2 8.2 11.2 11.2" stroke="#aaa" stroke-width="1.3" stroke-linecap="round"/></svg>
<div class="t" style="left:422px;top:210px;font-size:14.4px;color:#a3a3a3">Search product...</div>
<div class="a" style="left:390px;top:253px;width:554px;height:72px;border-radius:12px;background:#fff;border:1.5px solid #6d8df6"></div>
<div class="a" style="left:390px;top:341px;width:554px;height:70px;border-radius:12px;background:#fff"></div>
<div class="a" style="left:390px;top:427px;width:554px;height:70px;border-radius:12px;background:#fff"></div>
<div class="a" style="left:390px;top:513px;width:554px;height:70px;border-radius:12px;background:#fff"></div>
<div class="a" style="left:390px;top:599px;width:554px;height:70px;border-radius:12px;background:#fff"></div>
<div class="a" style="left:390px;top:685px;width:554px;height:70px;border-radius:12px;background:#fff;overflow:hidden"><div class="a" style="left:0;top:0;width:70px;height:70px;background:#c6ede0"></div></div>

<div class="a" style="left:390px;top:427px;width:69px;height:70px;border-radius:12px 0 0 12px;background:#f3f5f7"></div>
<div class="a" style="left:390px;top:513px;width:69px;height:70px;border-radius:12px 0 0 12px;background:#f3f5f7"></div>
<svg style="left:391px;top:258px" width="70" height="62" viewBox="0 0 1089 968"><use href="#dbowl"/></svg>
<svg style="left:399px;top:360px" width="53" height="32" viewBox="0 0 53 32"><use href="#cbowl"/></svg>
<svg style="left:398px;top:430px" width="52" height="60" viewBox="0 0 839 968"><use href="#bpack"/></svg>
<svg style="left:406px;top:527px" width="36" height="40" viewBox="0 0 36 40"><use href="#balls"/></svg>
<svg style="left:403px;top:607px" width="42" height="54" viewBox="0 0 42 54"><use href="#bag"/></svg>
<svg style="left:399px;top:699px" width="51" height="40" viewBox="0 0 51 40"><use href="#can"/></svg>
<div class="t" style="left:476px;top:282px;font-size:14.5px;color:#2b2b2b;-webkit-text-stroke:0.1px #2b2b2b;letter-spacing:0.2px">Double bowl for water and food</div>
<div class="t" style="left:476px;top:369px;font-size:14.5px;color:#2b2b2b;-webkit-text-stroke:0.1px #2b2b2b;letter-spacing:0.2px">Bowl of dry cat food</div>
<div class="t" style="left:476px;top:455px;font-size:14.5px;color:#2b2b2b;-webkit-text-stroke:0.1px #2b2b2b;letter-spacing:0.2px">Yellow pet backpack with vents</div>
<div class="t" style="left:476px;top:541px;font-size:14.5px;color:#2b2b2b;-webkit-text-stroke:0.1px #2b2b2b;letter-spacing:0.2px">Toy wool balls for cats</div>
<div class="t" style="left:476px;top:627px;font-size:14.5px;color:#2b2b2b;-webkit-text-stroke:0.1px #2b2b2b;letter-spacing:0.2px">Turkey &amp;amp; Rice Goodness for Kitty - 10kg</div>
<div class="t" style="left:476px;top:713px;font-size:14.5px;color:#2b2b2b;-webkit-text-stroke:0.1px #2b2b2b;letter-spacing:0.2px">Purrfect Pâté for cats</div>
<!-- red arrow -->
<svg style="left:0;top:0" width="1999" height="968" viewBox="0 0 1999 968"><path d="M251.5 385.5 354 244M336 247 354 244 357 262" fill="none" stroke="#ff0000" stroke-width="3.5" stroke-linecap="round" stroke-linejoin="round"/></svg>
</body></html>
